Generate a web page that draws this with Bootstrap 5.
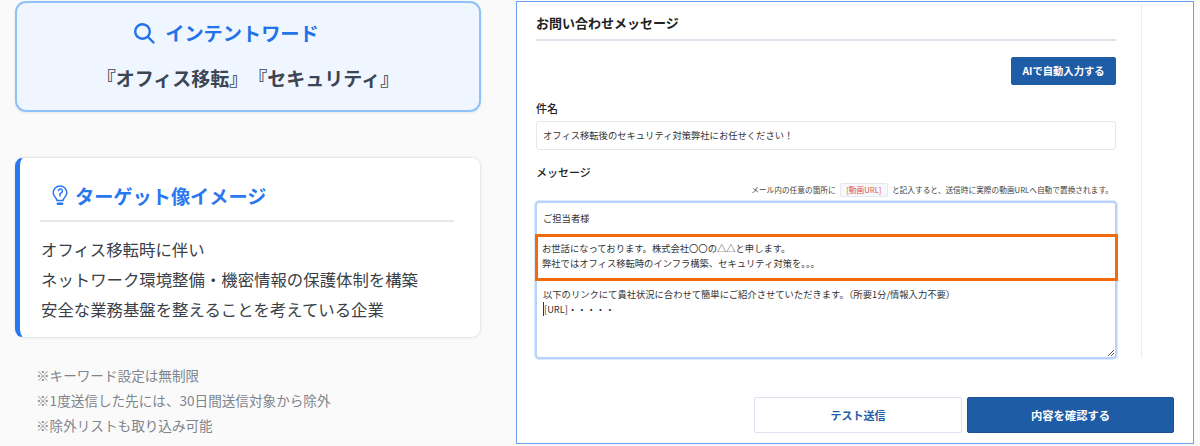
<!DOCTYPE html>
<html lang="ja">
<head>
    <meta charset="UTF-8">
    <title>インテントワード</title>
    <link href="https://cdn.jsdelivr.net/npm/bootstrap@5.3.3/dist/css/bootstrap.min.css" rel="stylesheet">
    <style>
        html, body {
            height: 446px;
            overflow: hidden;
        }
        body {
            background: #fafafa;
            font-family: "Noto Sans CJK JP", "Noto Sans", sans-serif;
            color: #333;
        }
        .page-wrap { width: 1200px; height: 446px; }
        .left-side { width: 466px; margin-left: 15px; padding-top: 1px; }
        .intent-box {
            height: 111px;
            background: #eff6ff;
            border: 2px solid #8fc2fb;
            border-radius: 11px;
            box-shadow: 0 1px 3px rgba(0,0,0,.08);
        }
        .intent-title {
            color: #2272e8;
            font-size: 19.2px;
            font-weight: 700;
            line-height: 28px;
            margin-top: 16px;
            padding-right: 44px;
            gap: 10px;
        }
        .intent-words {
            color: #3b4554;
            font-size: 19px;
            font-weight: 700;
            line-height: 26px;
            margin-top: 18px;
            text-spacing-trim: space-all;
        }
        .target-box {
            height: 181px;
            margin-top: 45px;
            background: #fff;
            border: 1px solid #e8e8ec;
            border-left: 5px solid #2a78f0;
            border-radius: 9px;
            padding: 24px 26px 0 20px;
            box-shadow: 0 0 4px rgba(0,0,0,.06);
        }
        .target-title {
            color: #2a78f0;
            font-size: 19.200px;
            font-weight: 700;
            line-height: 28px;
            padding: 0 0 10px 12px;
            border-bottom: 2px solid #e5e7eb;
            gap: 7px;
        }
        .target-lines {
            font-size: 16.4px;
            line-height: 30px;
            color: #3a3f47;
            margin-top: 12px;
            padding-left: 1px;
        }
        .note-lines {
            font-size: 13.6px;
            line-height: 25px;
            color: #7f858d;
            margin: 25px 0 0 21px;
        }
        .right-side {
            width: 678px;
            height: 443px;
            margin: 1px 0 0 35px;
            background: #fff;
            border: 1.5px solid #6c9ff0;
        }
        .form-pane {
            width: 625px;
            height: 354px;
            margin-top: 2px;
            padding: 7px 25px 0 19px;
            border-right: 1px solid #ececec;
        }
        .pane-title {
            font-size: 13px;
            font-weight: 700;
            line-height: 24px;
            color: #222;
            padding-bottom: 4px;
            border-bottom: 2px solid #dbe3ec;
        }
        .btn-ai {
            width: 105px;
            height: 28px;
            margin-top: 16px;
            padding: 0;
            font-size: 10.3px;
            font-weight: 700;
            line-height: 26px;
            border-radius: 2px;
            background: #1f5ca6;
            border-color: #1f5ca6;
            color: #fff;
        }
        .field-label {
            font-size: 11px;
            font-weight: 500;
            line-height: 16px;
            color: #222;
            margin: 15px 0 5px;
        }
        .field-input {
            height: 29px;
            padding: 0 6px;
            border: 1px solid #e3e7ee;
            border-radius: 3px;
            font-size: 9.3px;
            line-height: 27px;
            color: #333;
        }
        .field-gap { margin-top: 14px; margin-bottom: 0; }
        .hint-line {
            font-size: 7.7px;
            line-height: 14px;
            color: #444;
            padding-right: 3px;
            margin-top: 3px;
            white-space: nowrap;
        }
        .url-tag {
            display: inline-block;
            line-height: 12px;
            color: #e2504c;
            background: #f6f8fb;
            border: 1px solid #e3e8f0;
            border-radius: 2px;
            padding: 0 5.5px;
            margin: 0 4px;
        }
        .msg-area {
            position: relative;
            height: 158px;
            margin: 4px -1px 0;
            border: 2px solid #b7d3fb;
            border-radius: 4px;
            font-size: 9.3px;
            line-height: 15px;
            color: #333;
            box-shadow: 0 0 0 1px #dce9fd;
        }
        .msg-top { padding: 8px 6px 0; height: 31px; }
        .msg-mark {
            height: 47px;
            margin: 0 -3px 0 -2.5px;
            padding: 4px 5px 0 4.5px;
            border: 3.5px solid #f26a0c;
        }
        .msg-rest { padding: 6px 6px 0; }
        .caret-bar { border-left: 1px solid #333; }
        .grip-mark { position: absolute; right: 1px; bottom: 1px; }
        .foot-row { padding-top: 39px; padding-right: 19px; }
        .btn-test, .btn-confirm {
            height: 36px;
            padding: 0;
            font-size: 11px;
            font-weight: 700;
            border-radius: 2px;
        }
        .btn-test {
            width: 208px;
            background: #fff;
            color: #1f5ca6;
            border: 1px solid #dbe3ee;
        }
        .btn-confirm {
            width: 207px;
            margin-left: 5px;
            font-size: 11.3px;
            background: #1f5ca6;
            color: #fff;
            border: 1px solid #1a5296;
        }
    </style>
</head>
<body>

<div class="page-wrap d-flex">
    <div class="left-side">
        <div class="intent-box text-center">
            <div class="intent-title d-flex justify-content-center align-items-center">
                <svg width="22" height="22" viewBox="0 0 22 22" fill="none" stroke="#2272e8" stroke-width="2.4" stroke-linecap="round">
                    <circle cx="9.500" cy="9.500" r="7.300"/>
                    <path d="M15 15l5.500 5.500"/>
                </svg>
                <span>インテントワード</span>
            </div>
            <div class="intent-words">『オフィス移転』『セキュリティ』</div>
        </div>

        <div class="target-box">
            <div class="target-title d-flex align-items-center">
                <svg width="16" height="22" viewBox="0 0 16 22" fill="none" stroke="#2a78f0" stroke-width="1.500" stroke-linecap="round">
                    <path d="M5 15.500c0-2.500-3.800-3.800-3.800-7.700a6.800 6.800 0 0 1 13.600 0c0 3.900-3.800 5.200-3.800 7.700z"/>
                    <path d="M6.500 5.500a2 2 0 1 1 2.500 2.400l-1 .9v2.200"/>
                    <path d="M5.800 18.800h4.400" stroke-width="2.400"/>
                </svg>
                <span>ターゲット像イメージ</span>
            </div>
            <div class="target-lines">
                オフィス移転時に伴い<br>
                ネットワーク環境整備・機密情報の保護体制を構築<br>
                安全な業務基盤を整えることを考えている企業
            </div>
        </div>

        <div class="note-lines">
            ※キーワード設定は無制限<br>
            ※1度送信した先には、30日間送信対象から除外<br>
            ※除外リストも取り込み可能
        </div>
    </div>

    <div class="right-side">
        <div class="form-pane">
            <div class="pane-title">お問い合わせメッセージ</div>
            <div class="text-end">
                <button class="btn btn-ai">AIで自動入力する</button>
            </div>
            <div class="field-label">件名</div>
            <div class="field-input">オフィス移転後のセキュリティ対策弊社にお任せください！</div>
            <div class="field-label field-gap">メッセージ</div>
            <div class="hint-line text-end">メール内の任意の箇所に<span class="url-tag">[動画URL]</span>と記入すると、送信時に実際の動画URLへ自動で置換されます。</div>
            <div class="msg-area">
                <div class="msg-top">ご担当者様</div>
                <div class="msg-mark">
                    お世話になっております。株式会社〇〇の△△と申します。<br>
                    弊社ではオフィス移転時のインフラ構築、セキュリティ対策を｡｡｡
                </div>
                <div class="msg-rest">
                    以下のリンクにて貴社状況に合わせて簡単にご紹介させていただきます。（所要1分/情報入力不要）<br>
                    <span class="caret-bar">[URL]・・・・・</span>
                </div>
                <svg class="grip-mark" width="7" height="7" viewBox="0 0 7 7" stroke="#555" stroke-width="1">
                    <path d="M1 7l6-6M4 7l3-3"/>
                </svg>
            </div>
        </div>
        <div class="foot-row d-flex justify-content-end">
            <button class="btn btn-test">テスト送信</button>
            <button class="btn btn-confirm">内容を確認する</button>
        </div>
    </div>
</div>

</body>
</html>
